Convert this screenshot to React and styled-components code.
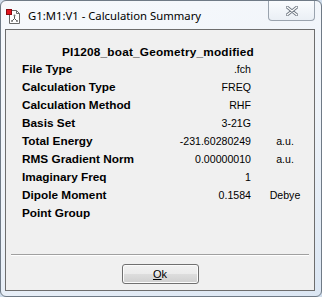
import React from 'react';
import styled, { createGlobalStyle } from 'styled-components';

const GlobalStyle = createGlobalStyle`
  html, body {
    margin: 0;
    padding: 0;
    background: #cfdceb;
  }
  body {
    font-family: "Liberation Sans", Arial, sans-serif;
  }
`;

const Frame = styled.div`
  width: 320px;
  height: 295px;
  border: 1px solid #6f7a86;
  border-radius: 6px;
  background: linear-gradient(160deg, #f7f9fc 0%, #eef3f9 55%, #dbe6f3 100%);
  display: flex;
  flex-direction: column;
  overflow: hidden;
`;

const TitleBar = styled.div`
  height: 28px;
  display: flex;
  align-items: flex-start;
  padding-left: 5px;
`;

const AppIcon = styled.svg`
  width: 16px;
  height: 16px;
  margin-top: 8px;
  flex: none;
`;

const Title = styled.div`
  margin-top: 7px;
  margin-left: 6px;
  font-family: "Noto Sans", "Open Sans", sans-serif;
  font-size: 11.3px;
  color: #000;
  line-height: 16px;
`;

const CloseButton = styled.div`
  margin-left: auto;
  margin-right: 6px;
  width: 47px;
  height: 20px;
  border: 1px solid #9aa3ae;
  border-top: none;
  border-radius: 0 0 4px 4px;
  background: linear-gradient(#fafcfe, #eaeff5);
  display: flex;
  align-items: center;
  justify-content: center;
  box-sizing: border-box;
`;

const Client = styled.div`
  flex: 1;
  margin: 0 6px 5px 4px;
  border: 1px solid #6d6d6d;
  background: #f0f0f0;
  display: flex;
  flex-direction: column;
`;

const Heading = styled.div`
  margin-top: 14px;
  height: 16px;
  line-height: 16px;
  text-align: center;
  font-weight: bold;
  font-size: 11.8px;
  letter-spacing: 0.2px;
  padding-right: 4px;
  color: #000;
`;

const Table = styled.div`
  display: grid;
  grid-template-columns: 121px 99px 50px;
  column-gap: 9px;
  padding-left: 16px;
  color: #000;
`;

const Label = styled.div`
  font-weight: bold;
  font-size: 11.8px;
  height: 18px;
  line-height: 18px;
  white-space: nowrap;
`;

const Value = styled.div`
  font-size: 10.6px;
  height: 18px;
  line-height: 18px;
  text-align: right;
  white-space: nowrap;
`;

const Unit = styled.div`
  font-size: 10.6px;
  height: 18px;
  line-height: 18px;
  text-align: center;
  white-space: nowrap;
`;

const Separator = styled.div`
  margin: auto 5px 0 5px;
  height: 1px;
  background: #a0a0a0;
  border-bottom: 1px solid #fff;
`;

const ButtonRow = styled.div`
  display: flex;
  justify-content: center;
  padding: 8px 0 6px;
`;

const Button = styled.button`
  width: 77px;
  height: 20px;
  border: 1px solid #707070;
  border-radius: 3px;
  background: linear-gradient(#f2f2f2 0%, #ebebeb 50%, #dddddd 51%, #cfcfcf 100%);
  font-family: "Liberation Sans", Arial, sans-serif;
  font-size: 11px;
  color: #000;
  padding: 0;
  box-shadow: inset 0 0 0 1px #fcfcfc;
  u { text-decoration: underline; }
`;

const rows = [
  ['File Type', '.fch', ''],
  ['Calculation Type', 'FREQ', ''],
  ['Calculation Method', 'RHF', ''],
  ['Basis Set', '3-21G', ''],
  ['Total Energy', '-231.60280249', 'a.u.'],
  ['RMS Gradient Norm', '0.00000010', 'a.u.'],
  ['Imaginary Freq', '1', ''],
  ['Dipole Moment', '0.1584', 'Debye'],
  ['Point Group', '', ''],
];

export default function App() {
  return (
    <>
      <GlobalStyle />
      <Frame>
        <TitleBar>
          <AppIcon viewBox="0 0 16 16">
            <path d="M3.5 1.5h7l3 3v10h-10z" fill="#fff" stroke="#6a6a6a" />
            <path d="M10.5 1.5v3h3" fill="none" stroke="#6a6a6a" />
            <rect x="0.5" y="0.5" width="5" height="5" fill="#e0141e" stroke="#8a0a10" />
            <path d="M8.5 6.5v3M8.5 9.5l-2.5 2.5M8.5 9.5l2.5 2.5" stroke="#555" strokeWidth="1" fill="none" />
            <circle cx="8.5" cy="6.5" r="1" fill="#777" />
            <circle cx="6" cy="12" r="1" fill="#777" />
            <circle cx="11" cy="12" r="1" fill="#777" />
          </AppIcon>
          <Title>G1:M1:V1 - Calculation Summary</Title>
          <CloseButton>
            <svg width="12" height="10" viewBox="0 0 12 10">
              <path d="M1 1l10 8M11 1L1 9" stroke="#6e7782" strokeWidth="3" strokeLinecap="round" />
              <path d="M1 1l10 8M11 1L1 9" stroke="#fff" strokeWidth="1.2" strokeLinecap="round" />
            </svg>
          </CloseButton>
        </TitleBar>
        <Client>
          <Heading>PI1208_boat_Geometry_modified</Heading>
          <Table>
            {rows.map(([label, value, unit]) => (
              <React.Fragment key={label}>
                <Label>{label}</Label>
                <Value>{value}</Value>
                <Unit>{unit}</Unit>
              </React.Fragment>
            ))}
          </Table>
          <Separator />
          <ButtonRow>
            <Button><u>O</u>k</Button>
          </ButtonRow>
        </Client>
      </Frame>
    </>
  );
}
